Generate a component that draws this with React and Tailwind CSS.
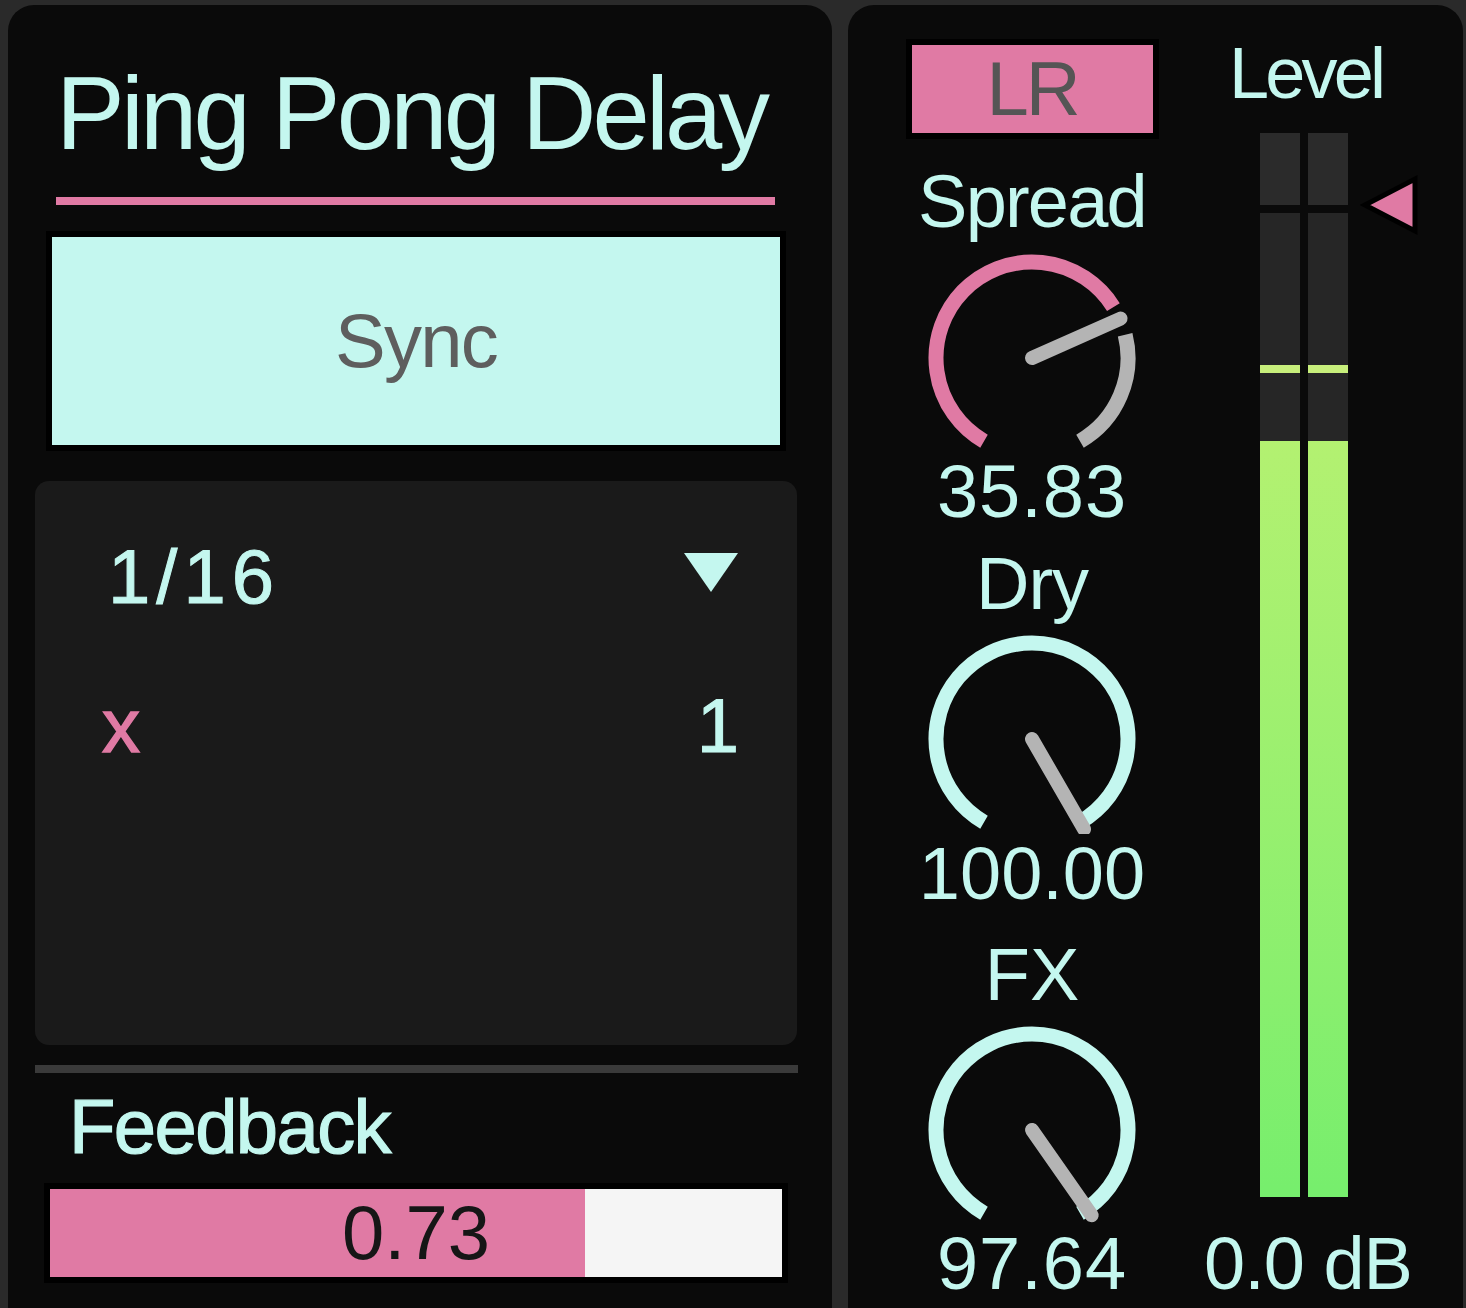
import React from 'react';

const MINT = '#c4f7ef';
const PINK = '#e07aa4';
const GRAY = '#b4b4b4';

// point on a circle, angle in degrees clockwise from top
const pt = (a, r) => {
    const rad = (a * Math.PI) / 180;
    return [r * Math.sin(rad), -r * Math.cos(rad)];
};

const arc = (a1, a2, r) => {
    const [x1, y1] = pt(a1, r);
    const [x2, y2] = pt(a2, r);
    const large = a2 - a1 > 180 ? 1 : 0;
    return `M ${x1} ${y1} A ${r} ${r} 0 ${large} 1 ${x2} ${y2}`;
};

function Knob({ segments, pointer, length }) {
    const [px, py] = pt(pointer, length);
    return (
        <svg width="216" height="200" viewBox="-108 -105 216 200" className="block">
            {segments.map((s, i) => (
                <path key={i} d={arc(s.from, s.to, 96)} fill="none" stroke={s.color} strokeWidth="15" />
            ))}
            <line x1="0" y1="0" x2={px} y2={py} stroke={GRAY} strokeWidth="14" strokeLinecap="round" />
        </svg>
    );
}

function MeterBar() {
    return (
        <div className="flex w-[40px] flex-col">
            <div className="h-[72px] bg-[#2b2b2b]" />
            <div className="h-[8px]" />
            <div className="h-[152px] bg-[#262626]" />
            <div className="h-[8px] bg-[#c8ef7c]" />
            <div className="h-[68px] bg-[#262626]" />
            <div className="h-[756px] bg-gradient-to-b from-[#b3f171] to-[#76ee6d]" />
        </div>
    );
}

export default function App() {
    return (
        <div className="flex h-[1308px] w-[1466px] gap-[16px] overflow-hidden bg-[#2a2a2a] pl-[8px] pt-[5px] font-['Liberation_Sans',Arial,sans-serif] leading-none">
            {/* left panel */}
            <section className="flex w-[824px] shrink-0 flex-col rounded-t-[26px] bg-[#0a0a0a]">
                <h1 className="ml-[48px] mt-[57px] text-[103px] font-normal tracking-[-3.8px] text-[#c4f7ef]">
                    Ping Pong Delay
                </h1>
                <div className="ml-[48px] mt-[32px] h-[8px] w-[719px] bg-[#e07aa4]" />
                <button className="ml-[44px] mt-[32px] flex h-[208px] w-[728px] items-center justify-center bg-[#c4f7ef] text-[76px] tracking-[-1.7px] text-[#5e5e5e] shadow-[0_0_0_6px_#000]">
                    Sync
                </button>
                <div className="ml-[27px] mt-[36px] flex h-[564px] w-[762px] flex-col rounded-[14px] bg-[#1a1a1a]">
                    <div className="mt-[58px] flex items-start justify-between pl-[73px] pr-[59px]">
                        <span className="text-[76px] tracking-[6px] text-[#c4f7ef] [-webkit-text-stroke:1px_#c4f7ef]">1/16</span>
                        <svg width="54" height="39" viewBox="0 0 54 39" className="mt-[14px]">
                            <polygon points="0,0 54,0 27,39" fill={MINT} />
                        </svg>
                    </div>
                    <div className="mt-[73px] flex items-baseline justify-between pl-[67px] pr-[58px] text-[76px]">
                        <span className="text-[#e07aa4] [-webkit-text-stroke:1.5px_#e07aa4]">x</span>
                        <span className="text-[#c4f7ef] [-webkit-text-stroke:1px_#c4f7ef]">1</span>
                    </div>
                </div>
                <div className="ml-[27px] mt-[20px] h-[8px] w-[763px] bg-[#3a3a3a]" />
                <div className="ml-[61px] mt-[16px] text-[76px] tracking-[-1.6px] text-[#c4f7ef] [-webkit-text-stroke:1.2px_#c4f7ef]">
                    Feedback
                </div>
                <div className="ml-[42px] mt-[24px] flex h-[88px] w-[732px] items-center justify-center bg-[linear-gradient(to_right,#e07aa4_535px,#f5f5f5_535px)] text-[76px] text-[#161616] shadow-[0_0_0_6px_#000]">
                    0.73
                </div>
            </section>

            {/* right panel */}
            <section className="flex w-[615px] shrink-0 rounded-t-[26px] bg-[#0a0a0a]">
                <div className="flex w-[368px] shrink-0 flex-col items-center text-[74px] text-[#c4f7ef]">
                    <div className="mt-[40px] flex h-[88px] w-[241px] items-center justify-center bg-[#e07aa4] text-[76px] tracking-[-3px] text-[#555] shadow-[0_0_0_6px_#000]">
                        LR
                    </div>
                    <div className="mt-[32px] tracking-[-1.8px]">Spread</div>
                    <div className="mt-[14px]">
                        <Knob
                            segments={[
                                { from: -150, to: 58, color: PINK },
                                { from: 76, to: 150, color: GRAY },
                            ]}
                            pointer={66}
                            length={97}
                        />
                    </div>
                    <div className="mt-[2px] tracking-[1px]">35.83</div>
                    <div className="mt-[18px] tracking-[-1px]">Dry</div>
                    <div className="mt-[13px]">
                        <Knob segments={[{ from: -150, to: 150, color: MINT }]} pointer={150} length={104} />
                    </div>
                    <div className="mt-[3px]">100.00</div>
                    <div className="mt-[27px]">FX</div>
                    <div className="mt-[13px]">
                        <Knob segments={[{ from: -150, to: 150, color: MINT }]} pointer={145} length={104} />
                    </div>
                    <div className="mt-[2px] tracking-[1px]">97.64</div>
                </div>

                <div className="flex flex-1 flex-col text-[#c4f7ef]">
                    <div className="ml-[13px] mt-[32px] text-[72px] tracking-[-3.8px]">Level</div>
                    <div className="ml-[44px] mt-[24px] flex h-[1064px] items-start">
                        <div className="flex gap-[8px]">
                            <MeterBar />
                            <MeterBar />
                        </div>
                        <svg width="60" height="62" viewBox="0 0 60 62" className="ml-[12px] mt-[41px]">
                            <polygon points="5,31 55,5 55,57" fill={PINK} stroke="#000" strokeWidth="5" strokeLinejoin="miter" />
                        </svg>
                    </div>
                    <div className="ml-[-12px] mt-[30px] text-[74px] tracking-[-1px]">0.0 dB</div>
                </div>
            </section>
        </div>
    );
}
